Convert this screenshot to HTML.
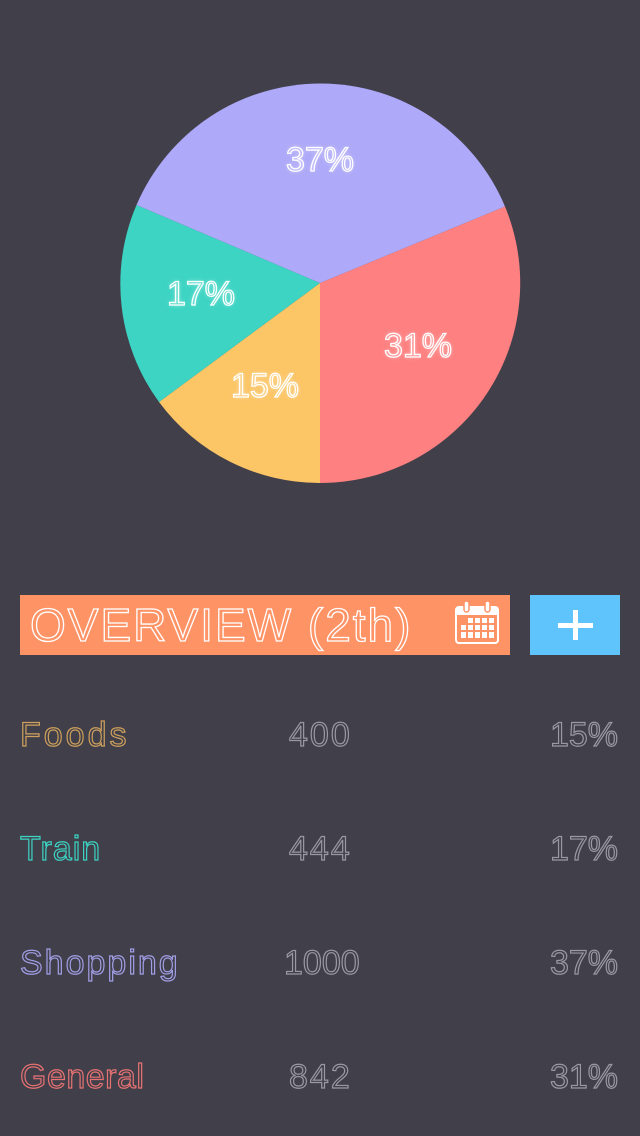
<!DOCTYPE html>
<html><head><meta charset="utf-8"><style>
body{margin:0;width:640px;height:1136px;background:#403f4a;font-family:"Liberation Sans",sans-serif;position:relative;overflow:hidden}
.row{position:absolute;left:20px;width:600px;height:40px;font-size:34px;letter-spacing:2px}
.row span{position:absolute;top:0;color:transparent}
.n{-webkit-text-stroke:1.2px #9a99a1;letter-spacing:2px}
.p{-webkit-text-stroke:1.2px #9a99a1;letter-spacing:0;right:2px}
</style></head><body>
<svg width="640" height="520" style="position:absolute;left:0;top:0">
<defs><filter id="g"><feGaussianBlur stdDeviation="2.5"/></filter></defs>
<path d="M320 283 L505 206.5 A200 200 0 0 1 320 483 Z" fill="#fe8080"/>
<path d="M320 283 L320 483 A200 200 0 0 1 159 402 Z" fill="#fcc566"/>
<path d="M320 283 L159 402 A200 200 0 0 1 136.5 205 Z" fill="#3dd4c3"/>
<path d="M320 283 L136.5 205 A200 200 0 0 1 505 206.5 Z" fill="#aea9f8"/>
<g font-family="Liberation Sans" font-size="34" letter-spacing="0" text-anchor="middle">
<g fill="#ffffff" opacity="0.5" filter="url(#g)">
<text x="320" y="171">37%</text><text x="201" y="305">17%</text><text x="418" y="357">31%</text><text x="265" y="397">15%</text></g>
<g fill="none" stroke="#fff" stroke-width="1.3">
<text x="320" y="171">37%</text><text x="201" y="305">17%</text><text x="418" y="357">31%</text><text x="265" y="397">15%</text></g>
</g>
</svg>
<div style="position:absolute;left:20px;top:595px;width:490px;height:60px;background:#fe9366"></div>
<div style="position:absolute;left:30px;top:600px;font-size:46px;color:transparent;-webkit-text-stroke:1.3px #fff;letter-spacing:2px;line-height:50px">OVERVIEW (2th)</div>
<svg width="46" height="44" style="position:absolute;left:454px;top:601px" viewBox="0 0 46 44">
<rect x="2" y="6" width="42" height="36" rx="3" fill="none" stroke="#fff" stroke-width="2"/>
<rect x="2" y="6" width="42" height="8" fill="#fff"/>
<rect x="10" y="0" width="5" height="11" rx="2.5" fill="#fff" stroke="#fe9366" stroke-width="1.5"/>
<rect x="31" y="0" width="5" height="11" rx="2.5" fill="#fff" stroke="#fe9366" stroke-width="1.5"/>
<g fill="#fff">
<rect x="14" y="17" width="5" height="5"/><rect x="21" y="17" width="5" height="5"/><rect x="28" y="17" width="5" height="5"/><rect x="35" y="17" width="5" height="5"/>
<rect x="7" y="24" width="5" height="5"/><rect x="14" y="24" width="5" height="5"/><rect x="21" y="24" width="5" height="5"/><rect x="28" y="24" width="5" height="5"/><rect x="35" y="24" width="5" height="5"/>
<rect x="7" y="31" width="5" height="6"/><rect x="14" y="31" width="5" height="6"/><rect x="21" y="31" width="5" height="6"/><rect x="28" y="31" width="5" height="6"/><rect x="35" y="31" width="5" height="6"/>
</g></svg>
<div style="position:absolute;left:530px;top:595px;width:90px;height:60px;background:#5ec4fb"></div>
<div style="position:absolute;left:573px;top:610px;width:5px;height:30px;background:#fff"></div>
<div style="position:absolute;left:558px;top:623px;width:35px;height:5px;background:#fff"></div>

<div class="row" style="top:716px"><span style="left:0;-webkit-text-stroke:1.2px #cfa15c;letter-spacing:3px">Foods</span><span class="n" style="left:269px">400</span><span class="p">15%</span></div>
<div class="row" style="top:830px"><span style="left:0;-webkit-text-stroke:1.2px #3dd4c3;letter-spacing:1px">Train</span><span class="n" style="left:269px">444</span><span class="p">17%</span></div>
<div class="row" style="top:944px"><span style="left:0;-webkit-text-stroke:1.2px #a29ee6;letter-spacing:2px">Shopping</span><span class="n" style="left:264px;letter-spacing:0">1000</span><span class="p">37%</span></div>
<div class="row" style="top:1058px"><span style="left:0;-webkit-text-stroke:1.2px #e87272;letter-spacing:0.5px">General</span><span class="n" style="left:269px">842</span><span class="p">31%</span></div>
</body></html>
